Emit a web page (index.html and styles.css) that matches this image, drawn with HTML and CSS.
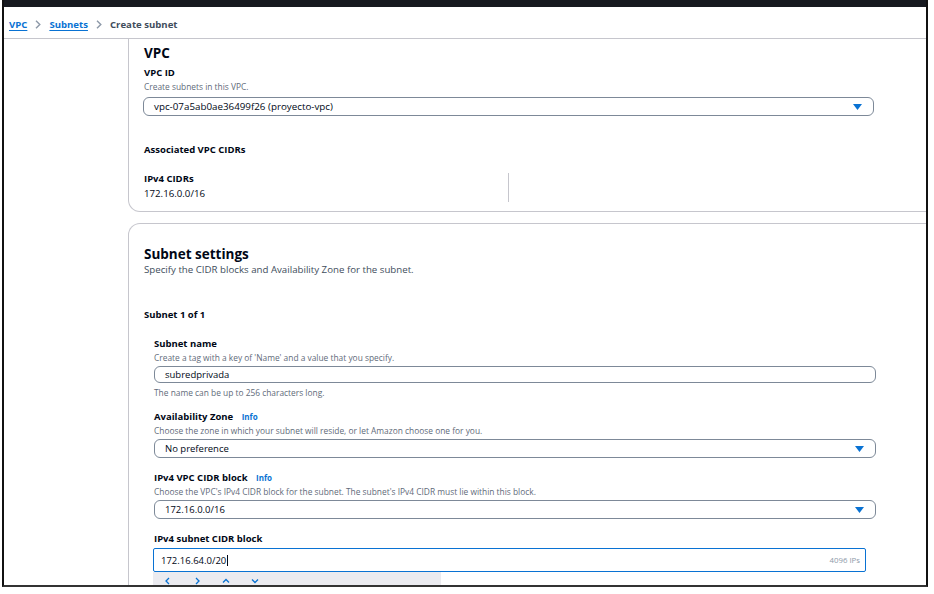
FILE: index.html
```html
<!DOCTYPE html>
<html lang="en">
<head>
<meta charset="utf-8">
<title>Create subnet</title>
<link rel="stylesheet" href="styles.css">
</head>
<body>
<div class="frame">
  <div class="topbar"></div>
  <nav class="breadcrumb">
    <a class="crumb-link" href="#">VPC</a>
    <svg class="chev" width="6" height="9" viewBox="0 0 6 9"><path d="M1 0.8L4.8 4.5L1 8.2" fill="none" stroke="#8d99a8" stroke-width="1.4"/></svg>
    <a class="crumb-link" href="#">Subnets</a>
    <svg class="chev" width="6" height="9" viewBox="0 0 6 9"><path d="M1 0.8L4.8 4.5L1 8.2" fill="none" stroke="#8d99a8" stroke-width="1.4"/></svg>
    <span class="crumb-current">Create subnet</span>
  </nav>
  <div class="main">
    <aside class="side"></aside>
    <div class="content">
      <section class="card card-vpc">
        <h2 class="h-vpc">VPC</h2>
        <div class="label l-vpcid">VPC ID</div>
        <div class="desc d-vpcid">Create subnets in this VPC.</div>
        <div class="select s-vpc">
          <span class="val">vpc-07a5ab0ae36499f26 (proyecto-vpc)</span>
          <svg class="caret" width="9" height="6" viewBox="0 0 9 6"><path d="M0 0H9L4.5 6Z" fill="#0972d3"/></svg>
        </div>
        <div class="label l-assoc">Associated VPC CIDRs</div>
        <div class="cidr-grid">
          <div class="cidr-col">
            <div class="label">IPv4 CIDRs</div>
            <div class="value">172.16.0.0/16</div>
          </div>
          <div class="cidr-col2"></div>
        </div>
      </section>

      <section class="card card-subnet">
        <h2 class="h-settings">Subnet settings</h2>
        <div class="desc-lg">Specify the CIDR blocks and Availability Zone for the subnet.</div>
        <div class="label l-count">Subnet 1 of 1</div>
        <div class="fields">
          <div class="label f-first">Subnet name</div>
          <div class="desc d-gap">Create a tag with a key of 'Name' and a value that you specify.</div>
          <div class="input"><span class="val">subredprivada</span></div>
          <div class="desc d-hint">The name can be up to 256 characters long.</div>

          <div class="label f-next">Availability Zone <a class="info" href="#">Info</a></div>
          <div class="desc d-gap">Choose the zone in which your subnet will reside, or let Amazon choose one for you.</div>
          <div class="select s-field">
            <span class="val">No preference</span>
            <svg class="caret" width="9" height="6" viewBox="0 0 9 6"><path d="M0 0H9L4.5 6Z" fill="#0972d3"/></svg>
          </div>

          <div class="label f-next2">IPv4 VPC CIDR block <a class="info" href="#">Info</a></div>
          <div class="desc d-gap">Choose the VPC's IPv4 CIDR block for the subnet. The subnet's IPv4 CIDR must lie within this block.</div>
          <div class="select s-field">
            <span class="val">172.16.0.0/16</span>
            <svg class="caret" width="9" height="6" viewBox="0 0 9 6"><path d="M0 0H9L4.5 6Z" fill="#0972d3"/></svg>
          </div>

          <div class="label f-next3">IPv4 subnet CIDR block</div>
          <div class="input focus"><span class="val">172.16.64.0/20<span class="cursor"></span></span><span class="ips">4096 IPs</span></div>
          <div class="stepper">
            <svg width="8" height="8" viewBox="0 0 8 8"><path d="M5 1L2 4L5 7" fill="none" stroke="#0972d3" stroke-width="1.3"/></svg>
            <svg width="8" height="8" viewBox="0 0 8 8"><path d="M3 1L6 4L3 7" fill="none" stroke="#0972d3" stroke-width="1.3"/></svg>
            <svg width="8" height="8" viewBox="0 0 8 8"><path d="M1 5.5L4 2.5L7 5.5" fill="none" stroke="#0972d3" stroke-width="1.3"/></svg>
            <svg width="8" height="8" viewBox="0 0 8 8"><path d="M1 2.5L4 5.5L7 2.5" fill="none" stroke="#0972d3" stroke-width="1.3"/></svg>
          </div>
        </div>
      </section>
    </div>
  </div>
</div>
</body>
</html>
```

FILE: styles.css
```css
* { box-sizing: border-box; }
html, body { margin: 0; padding: 0; background: #fff; }
body {
  font-family: "Open Sans", "Noto Sans", sans-serif;
  color: #000716;
  width: 934px;
  height: 594px;
  overflow: hidden;
}
.frame {
  margin-left: 2px;
  width: 926px;
  height: 587px;
  border-left: 2px solid #111;
  border-right: 2px solid #111;
  border-bottom: 2px solid #333;
  overflow: hidden;
  display: flex;
  flex-direction: column;
}
.topbar {
  height: 7px;
  background: #16191f;
  flex: none;
  margin-left: -2px;
  margin-right: -2px;
}
.breadcrumb {
  flex: none;
  height: 32px;
  border-bottom: 1px solid #c6c6cd;
  display: flex;
  align-items: center;
  padding-left: 5px;
  padding-top: 3px;
  font-size: 9.6px;
  font-weight: 700;
  gap: 8px;
}
.crumb-link { color: #0972d3; text-decoration: underline; text-underline-offset: 2px; }
.chev { flex: none; }
.crumb-current { color: #414d5c; }

.main { flex: 1; display: flex; min-height: 0; }
.side { width: 124px; flex: none; }
.content { flex: 1; display: flex; flex-direction: column; margin-right: -30px; }

.card {
  border: 1px solid #c6c6cd;
  background: #fff;
}
.card-vpc {
  border-top: none;
  border-radius: 0 0 0 12px;
  padding: 5px 0 10px 15px;
  height: 173px;
}
.card-subnet {
  margin-top: 11px;
  border-radius: 12px 0 0 0;
  border-bottom: none;
  padding: 22px 0 0 15px;
  flex: 1;
}

h2 { margin: 0; font-weight: 700; }
.h-vpc { font-size: 13.5px; line-height: 18px; }
.h-settings { font-size: 13.5px; line-height: 16px; }

.label { font-size: 9.5px; font-weight: 700; line-height: 14px; }
.desc { font-size: 8.4px; line-height: 11px; color: #5f6b7a; }
.desc-lg { font-size: 9.7px; line-height: 12px; color: #414d5c; margin-top: 2px; }
.value { font-size: 9.7px; line-height: 14px; }
.info { color: #0972d3; text-decoration: none; font-size: 8px; font-weight: 700; margin-left: 6px; }

.l-vpcid { margin-top: 4px; }
.d-vpcid { margin-top: 1px; }

.select, .input {
  height: 19px;
  border: 1px solid #7d8998;
  border-radius: 6px;
  display: flex;
  align-items: center;
  padding: 0 10px;
  font-size: 9.5px;
  justify-content: space-between;
}
.s-vpc { margin-top: 5px; margin-left: -1px; width: 731px; font-size: 9.8px; }
.caret { flex: none; margin-right: 1px; }

.l-assoc { margin-top: 27px; }
.cidr-grid { display: grid; grid-template-columns: 364px 1fr; margin-top: 15px; }
.cidr-col2 { border-left: 1px solid #c6c6cd; margin: 1px 0 0 0; height: 29px; }
.value { margin-top: 1px; }

.l-count { margin-top: 32px; }

.fields { padding-left: 10px; width: 732px; }
.f-first { margin-top: 15px; }
.d-gap { margin-top: 1px; margin-bottom: 3px; }
.d-hint { margin-top: 4px; }
.f-next { margin-top: 12px; }
.f-next2 { margin-top: 13px; }
.f-next3 { margin-top: 13px; }
.fields .input, .fields .select { width: 722px; }
.fields .input:not(.focus) { height: 17px; margin-top: 1px; }
.input .val, .select .val { white-space: nowrap; }

.input.focus {
  margin-top: 2px;
  margin-left: -1px;
  width: 713px;
  height: 24px;
  border: 1px solid #0972d3;
  border-radius: 2px;
  padding-left: 7px;
  padding-right: 5px;
}
.cursor {
  display: inline-block;
  width: 1px;
  height: 11px;
  background: #000716;
  vertical-align: -2px;
  margin-left: 1px;
}
.ips { font-size: 7.8px; color: #8d99a8; }
.stepper {
  margin-left: -1px;
  width: 288px;
  height: 14px;
  background: #ebebf0;
  display: flex;
  align-items: center;
  padding-left: 11px;
  padding-top: 4px;
  gap: 21px;
}
```
